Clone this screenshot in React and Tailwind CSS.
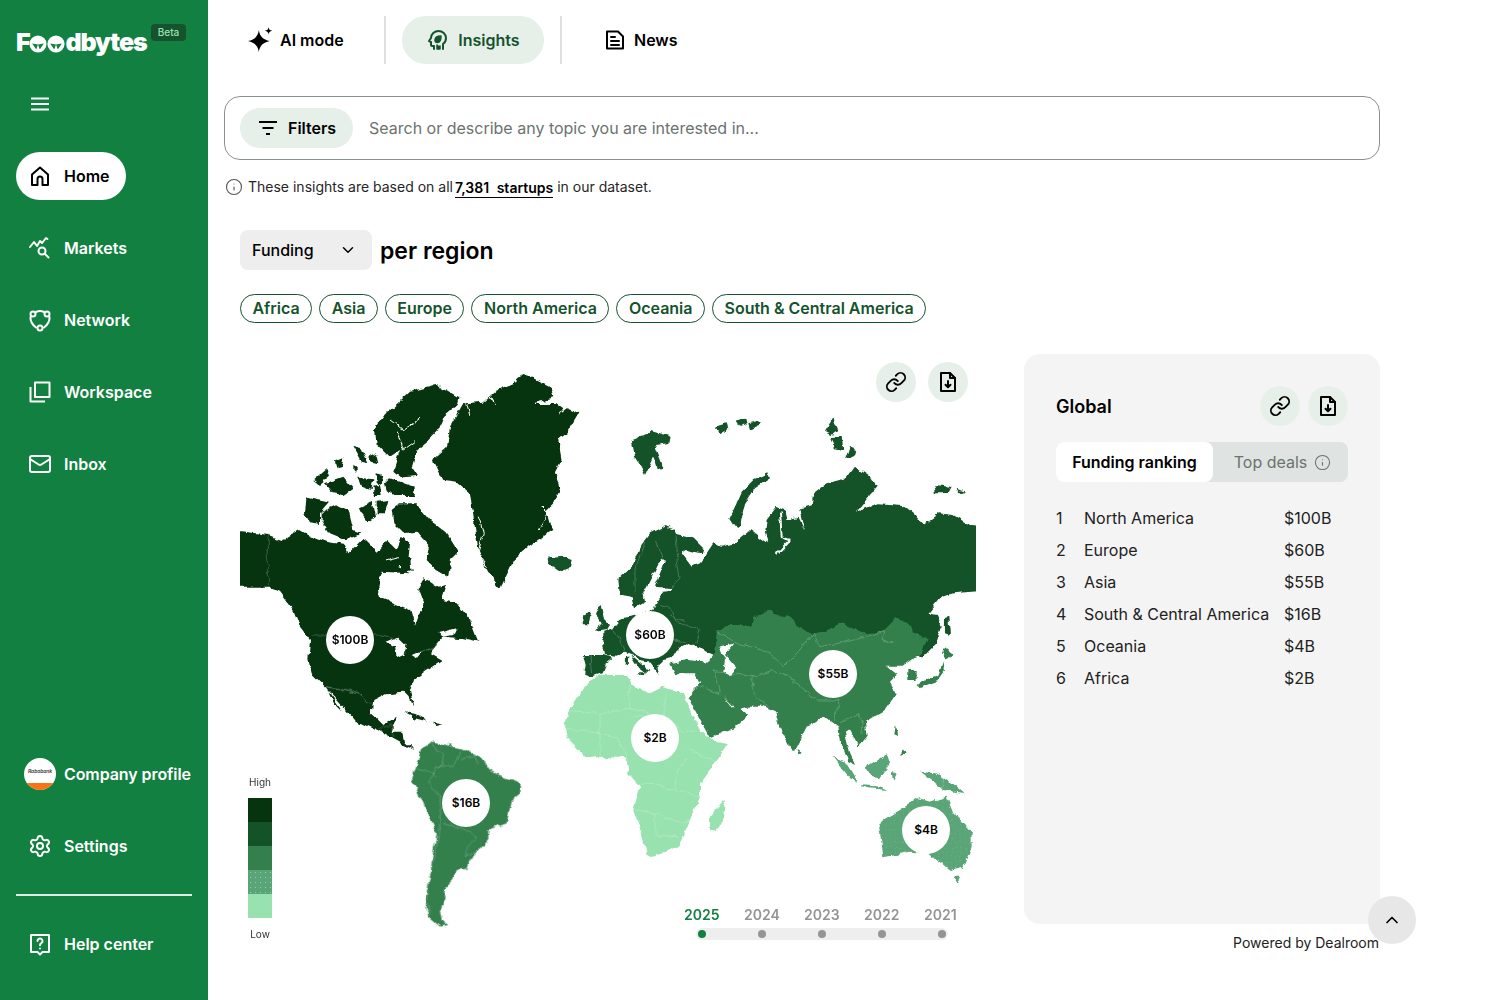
import { ChevronDown, ChevronUp, Info, Settings, Mail, Link as LinkIcon } from "lucide-react";

const C1 = "#06340f";
const C2 = "#145228";
const C3 = "#33804d";
const C4 = "#5aa577";
const C5 = "#98e2b0";

const Poly = ({ fill, d }) => <polygon fill={fill} points={d} />;
const Line = ({ d, w = 1.3, c = "#ffffff", o = 0.5 }) => (
  <polyline points={d} fill="none" stroke={c} strokeWidth={w} strokeOpacity={o} strokeLinejoin="round" />
);

const australia = "835,520 900,480 955,445 990,455 1040,440 1060,490 1115,550 1115,590 1090,650 1050,660 1010,630 990,610 930,605 890,615 850,622 845,580";

const WorldMap = () => (
  <svg viewBox="240 354 736 600" className="absolute inset-0 w-[736px] h-[600px]">
    <defs>
      <pattern id="dots" width="14" height="14" patternUnits="userSpaceOnUse">
        <circle cx="4" cy="4" r="1.2" fill="#ffffff" fillOpacity="0.35" />
      </pattern>
      {/* roughens the hand drawn coastlines */}
      <filter id="rough" filterUnits="userSpaceOnUse" x="200" y="340" width="820" height="620" colorInterpolationFilters="sRGB">
        <feTurbulence type="fractalNoise" baseFrequency="0.11" numOctaves="3" seed="7" result="noise" />
        <feDisplacementMap in="SourceGraphic" in2="noise" scale="6" xChannelSelector="R" yChannelSelector="G" />
      </filter>
    </defs>

    <g filter="url(#rough)">
      {/* north america + arctic, coords from the x3 crop at 230,370 */}
      <g transform="translate(230 370) scale(0.3333)">
        <Poly fill={C1} d="880,15 910,25 960,50 970,85 915,100 980,100 1000,115 985,135 1010,115 1045,130 1010,190 985,210 995,270 975,310 990,360 970,400 950,420 965,470 970,480 900,525 850,570 810,655 770,600 745,540 735,470 720,370 680,335 640,330 610,270 650,235 660,170 700,100 760,95 800,60 850,40" />
        <Poly fill={C1} d="470,130 540,65 620,45 685,85 680,105 640,140 620,185 590,215 560,240 545,290 565,320 520,325 490,300 510,240 480,260 440,220 435,180" />
        <Poly fill={C1} d="465,340 480,325 555,350 550,378 490,378 470,360" />
        <Poly fill={C1} d="230,380 300,395 270,430 270,465 240,460 225,430" />
        <Poly fill={C1} d="275,425 320,405 355,420 370,480 395,490 350,510 300,490 275,450" />
        <Poly fill={C1} d="250,330 290,295 300,320 270,345" />
        <Poly fill={C1} d="285,340 340,320 370,355 340,375 310,370" />
        <Poly fill={C1} d="370,230 395,235 415,280 395,275" />
        <Poly fill={C1} d="315,275 340,265 335,290 320,295" />
        <Poly fill={C1} d="420,250 440,260 445,280 425,275" />
        <Poly fill={C1} d="385,320 430,325 425,360 395,350" />
        <Poly fill={C1} d="440,310 460,315 455,345 440,340" />
        <Poly fill={C1} d="370,285 380,290 380,305 370,300" />
        <Poly fill={C1} d="430,350 450,345 455,375 435,375" />
        <Poly fill={C1} d="390,410 425,395 435,440 415,455 395,430" />
        <Poly fill={C1} d="440,395 475,390 465,430 440,430" />
        <Poly fill={C1} d="485,420 510,400 560,400 600,450 650,490 685,545 660,570 655,620 620,600 590,570 600,530 560,485 520,490 490,460" />
        <Poly fill={C1} d="505,570 540,560 545,600 515,610" />
        <Poly
          fill={C1}
          d="-30,475 115,495 155,510 210,480 235,495 290,515 345,525 355,550 400,505 440,545 470,510 500,540 515,500 540,520 535,570 500,590 540,610 455,605 445,650 450,680 540,720 555,770 565,740 580,700 565,660 580,625 620,650 650,645 635,690 680,700 720,750 745,815 700,805 640,800 600,850 635,870 590,900 550,930 540,960 550,1010 535,980 520,965 470,970 430,990 425,1030 460,1065 500,1040 485,1085 520,1085 525,1115 550,1140 520,1125 440,1080 375,1050 330,1000 290,955 245,910 235,870 240,810 210,770 190,720 150,665 115,650 -30,650"
        />
        <Poly fill={C1} d="290,955 310,985 340,1030 310,1000" />
        <Poly fill={C1} d="525,1030 560,1035 595,1055 555,1045" />
        <Poly fill={C1} d="605,1055 640,1060 620,1065" />
        <Poly fill={C2} d="955,565 1000,560 1025,570 1020,590 985,605 965,590" />
        {/* fjords and lakes */}
        <Line d="915,100 975,100" w={4} o={1} />
        <Line d="710,100 720,135" w={3} o={1} />
        <Line d="780,80 800,110" w={4} o={1} />
        <Line d="935,410 955,430 925,480" w={3} o={1} />
        <Line d="745,440 760,490 745,545 770,590" w={3} o={1} />
        <Line d="480,150 520,180 570,145" w={3} o={1} />
        <Line d="500,180 520,240 555,215" w={3} o={1} />
        <Line d="470,570 510,560" w={3} o={1} />
        <Poly fill="#ffffff" d="470,815 505,800 530,825 520,855 500,865 495,830" />
        <Poly fill="#ffffff" d="545,855 580,840 560,865" />
        <Poly fill="#ffffff" d="625,790 680,775 670,795 640,800" />
        <Line d="115,495 115,650" />
        <Line d="245,795 440,795 490,805" />
        <Line d="555,855 610,830 640,810 640,835 590,840" />
        <Line d="285,950 350,960 390,970 415,1000" />
      </g>

      {/* russia, scandinavia, arctic islands, crop at 560,360 */}
      <g transform="translate(560 360) scale(0.3333)">
        <Poly
          fill={C2}
          d="1300,500 1220,490 1180,465 1140,460 1090,495 1060,460 1030,435 950,430 890,455 950,380 930,350 885,320 860,355 800,370 760,400 755,435 720,445 735,510 715,470 680,480 672,450 650,440 620,480 615,520 625,550 570,510 525,550 480,560 460,550 420,610 395,620 365,580 380,570 425,580 430,565 400,535 350,525 340,505 320,495 270,520 240,560 215,620 175,660 180,705 215,715 222,745 255,725 250,700 260,680 300,600 315,605 285,680 340,685 300,715 340,730 420,820 450,880 500,900 1000,900 1095,885 1130,850 1145,800 1131,765 1105,760 1140,714 1180,700 1300,690"
        />
        <Poly fill={C2} d="215,240 265,220 275,210 330,225 325,250 285,255 310,320 290,325 280,290 255,345 240,315 225,290" />
        <Poly fill={C2} d="505,480 525,440 545,395 580,360 625,340 630,355 585,385 555,430 540,500 515,495" />
        <Poly fill={C2} d="465,200 500,190 505,205 480,220" />
        <Poly fill={C2} d="530,185 555,175 560,195 540,200" />
        <Poly fill={C2} d="565,190 605,180 600,195 570,208" />
        <Poly fill={C2} d="795,215 820,175 835,210 815,225" />
        <Poly fill={C2} d="810,235 845,230 850,270 825,265" />
        <Poly fill={C2} d="855,300 870,255 890,285" />
        <Poly fill={C2} d="1120,375 1175,380 1165,400 1125,400" />
        <Poly fill={C2} d="1190,385 1215,395 1205,400" />
        <Poly fill={C2} d="1155,774 1165,770 1170,825 1155,820" />
        <Line d="660,455 665,530 692,540 650,585" w={6} o={1} />
        <Line d="290,540 305,590 300,610" />
        <Line d="345,525 350,590 360,650 330,690" />
        <Line d="255,545 225,630 225,700" />
      </g>

      {/* europe + turkey, crop at 570,590 */}
      <g transform="translate(570 590) scale(0.3333)">
        <Poly fill={C2} d="42,195 100,195 130,205 105,225 95,250 60,262 45,255 50,225" />
        <Poly fill={C2} d="100,125 130,115 155,85 180,80 250,60 262,30 280,5 310,0 400,0 440,120 420,190 385,175 350,160 320,180 305,205 280,210 265,225 270,255 258,240 240,215 210,210 190,195 165,185 140,200 105,195 100,170" />
        <Poly fill={C2} d="180,195 205,215 235,240 225,250 205,235" />
        <Poly fill={C2} d="85,50 95,45 105,90 120,105 110,120 75,125 95,100 75,75" />
        <Poly fill={C2} d="40,75 65,65 55,100 35,100" />
        <Poly fill={C2} d="168,200 175,200 173,225 167,225" />
        <Poly fill={C2} d="205,250 225,250 220,262" />
        <Line d="130,115 150,150 165,185" />
        <Line d="60,195 65,255" />
        <Line d="270,45 300,55 330,100 390,120 380,160" />
        <Line d="300,75 345,95" />
        <Line d="310,150 350,155" />
      </g>

      {/* middle east and asia, africa, oceania, crop at 600,650 */}
      <g transform="translate(600 650) scale(0.3333)">
        <Poly
          fill={C3}
          d="210,40 260,30 330,35 345,10 350,-55 380,-75 455,-75 460,-100 510,-120 540,-100 570,-105 590,-70 640,-50 670,-55 725,-80 790,-50 845,-55 885,-95 925,-85 935,-55 980,-35 960,15 940,25 905,50 860,50 890,75 870,95 890,130 855,180 795,215 800,260 775,290 750,240 735,250 750,310 765,345 745,335 720,270 715,230 690,210 670,200 620,230 590,290 575,300 540,230 530,190 490,170 440,170 410,180 365,135 400,175 420,175 445,195 400,235 330,265 300,210 265,140 300,100 285,70 225,70"
        />
        <Poly fill={C3} d="925,60 950,60 950,90 925,90" />
        <Poly fill={C3} d="950,105 970,90 1015,75 1030,35 1035,60 1010,95 960,115" />
        <Poly fill={C3} d="1030,10 1035,-5 1060,15 1040,25" />
        <Poly fill={C3} d="590,295 605,305 595,315" />
        <Poly fill={C3} d="885,225 892,255 880,250" />
        <Poly fill={C3} d="905,295 922,305 905,315" />
        <Poly fill="#ffffff" d="360,-10 400,-20 375,15 410,55 390,75 370,65 375,30" />
        <Poly fill={C5} d="0,75 85,75 95,105 150,130 190,110 250,130 270,180 300,240 335,270 385,280 350,330 300,400 300,440 270,510 235,590 160,620 140,610 125,550 100,480 120,410 85,370 80,325 0,320 -40,325 -100,265 -105,235 -95,185 -35,95" />
        <Poly fill={C5} d="375,450 370,500 350,545 330,540 330,500" />
        <Poly fill={C4} d="700,320 745,345 775,395 750,385" />
        <Poly fill={C4} d="775,405 840,410 865,420 800,415" />
        <Poly fill={C4} d="800,350 860,310 870,340 840,385 810,380" />
        <Poly fill={C4} d="875,365 890,375 880,395" />
        <Poly fill={C4} d="960,365 1010,370 1060,405 1095,430 1030,420 990,390" />
        <Poly fill={C4} d={australia} />
        <Poly fill="url(#dots)" d={australia} />
        <Poly fill={C4} d="1060,680 1080,680 1070,703" />
        {/* country borders */}
        <Line d="85,105 90,175 0,190" />
        <Line d="195,125 195,200 95,200" />
        <Line d="90,175 195,200 260,250 290,240" />
        <Line d="255,290 310,320 350,330" />
        <Line d="100,400 170,405 225,420 300,440" />
        <Line d="105,480 170,490 245,520 270,510" />
        <Line d="165,490 165,555 240,560" />
        <Line d="225,420 230,360 260,330" />
        <Line d="-95,185 0,190 0,320" />
        <Line d="-100,235 50,260 85,330" />
        <Line d="340,60 360,130 300,110" />
        <Line d="340,65 400,70 460,80 455,120 520,190" />
        <Line d="460,80 520,60 580,90 650,150 720,150 700,210" />
        <Line d="350,-55 420,-20 510,10 550,50 590,10 640,-50" />
        <Line d="640,-50 660,-10 740,-25 850,-55" />
        <Line d="850,-55 850,-25 880,-25" />
        <Line d="720,215 780,190 790,250" />
        <Line d="1030,370 1030,420" />
      </g>

      {/* south america, crop at 240,660 */}
      <g transform="translate(240 660) scale(0.3333)">
        <Poly fill={C3} d="580,245 620,255 665,265 720,290 745,330 780,345 845,370 840,400 815,420 800,490 745,510 745,540 700,590 680,625 650,630 640,660 610,690 620,710 600,750 605,780 625,795 600,800 565,770 555,720 570,650 575,600 590,520 550,430 515,360 525,330 540,290 545,265" />
        <Line d="575,250 585,270 610,285 605,315 590,320 565,370 600,410" />
        <Line d="530,325 555,330 590,350" />
        <Line d="660,270 640,320 600,315" />
        <Line d="660,300 705,290 715,310" />
        <Line d="600,410 600,490 590,560 575,620 560,720 570,770" />
        <Line d="610,490 680,510 710,530 680,560 680,590 715,570" />
        <Line d="255,80 330,90 360,100 385,130 395,130" />
        <Line d="415,205 455,195 460,230" />
      </g>
    </g>
  </svg>
);

const CircleBtn = ({ children }) => (
  <button className="w-10 h-10 rounded-full bg-[#e7efe9] flex items-center justify-center text-black">
    {children}
  </button>
);

const FileDown = () => (
  <svg width="24" height="24" viewBox="0 0 24 24" fill="none" stroke="currentColor" strokeWidth="2" strokeLinejoin="round" strokeLinecap="round">
    <path d="M5 3h9l5 5v13H5z" />
    <path d="M14 3v5h5" />
    <path d="M12 11v6M9.5 14.8 12 17.3l2.5-2.5" />
  </svg>
);

const Bubble = ({ className, children }) => (
  <div className={`absolute w-12 h-12 rounded-full bg-white flex items-center justify-center text-xs font-semibold text-black ${className}`}>
    {children}
  </div>
);

const navIcon = {
  width: 24,
  height: 24,
  viewBox: "0 0 24 24",
  fill: "none",
  stroke: "currentColor",
  strokeWidth: 2,
  strokeLinecap: "round",
  strokeLinejoin: "round",
};

const NavItem = ({ icon, label }) => (
  <a className="flex items-center h-12 pl-3 gap-3 text-white font-semibold text-base">
    {icon}
    <span>{label}</span>
  </a>
);

const ranking = [
  ["North America", "$100B"],
  ["Europe", "$60B"],
  ["Asia", "$55B"],
  ["South & Central America", "$16B"],
  ["Oceania", "$4B"],
  ["Africa", "$2B"],
];

const years = ["2025", "2024", "2023", "2022", "2021"];
const regions = ["Africa", "Asia", "Europe", "North America", "Oceania", "South & Central America"];

const Leaf = () => (
  <svg width="18" height="18" viewBox="0 0 20 20" className="shrink-0 mt-[3px]">
    <circle cx="10" cy="10" r="9.5" fill="#fff" />
    <path d="M3.5 9.5 10 10.5 8 16zM16.5 9.5 10 10.5 12 16z" fill="#118040" />
  </svg>
);

export default function App() {
  return (
    <div className="flex min-h-[1000px] bg-white text-black font-['Inter',sans-serif]">
      <aside className="w-[208px] shrink-0 bg-[#118040] flex flex-col px-4">
        <div className="relative h-[80px] flex items-start pt-[26px]">
          <div className="flex items-center text-white font-black text-[25px] leading-[32px] tracking-[-0.045em]">
            <span>F</span>
            <Leaf />
            <Leaf />
            <span>dbytes</span>
          </div>
          <span className="absolute left-[135px] top-[24px] w-[35px] h-[17px] rounded bg-[#14532d] text-[#98e2b0] text-[10px] font-medium flex items-center justify-center">
            Beta
          </span>
        </div>
        <div className="h-12 pl-3 flex items-center text-white">
          <svg {...navIcon}>
            <path d="M3 6.500h18M3 12h18M3 17.500h18" strokeLinecap="butt" strokeWidth="1.800" />
          </svg>
        </div>
        <nav className="mt-6 flex flex-col gap-6">
          <a className="flex items-center h-12 w-[110px] pl-3 gap-3 bg-white text-black rounded-full font-semibold text-base">
            <svg {...navIcon}>
              <path d="M4 21V10.500L12 3.500l8 7V21h-5.500v-6a2.500 2.500 0 0 0-5 0v6z" />
            </svg>
            <span>Home</span>
          </a>
          <NavItem
            label="Markets"
            icon={
              <svg {...navIcon}>
                <path d="M2 11l4-5 3 4 3-5 2 2 4-5 1.500 1" />
                <circle cx="14" cy="15" r="3.500" />
                <path d="M17 18l3.500 3.500" />
              </svg>
            }
          />
          <NavItem
            label="Network"
            icon={
              <svg {...navIcon}>
                <path d="M8 4c2.500-1.300 5.500-1.300 8 0M21.500 9c.3 4-1.500 7.500-5.500 10.500M8 19.500C4 16.500 2.200 13 2.500 9" />
                <circle cx="5" cy="6" r="2.500" />
                <circle cx="19" cy="6" r="2.500" />
                <circle cx="12" cy="20" r="2.500" />
              </svg>
            }
          />
          <NavItem
            label="Workspace"
            icon={
              <svg {...navIcon}>
                <path d="M7 2.500h14.500V17H7z" strokeLinecap="butt" />
                <path d="M2.500 7v14.500H17" strokeLinecap="butt" />
              </svg>
            }
          />
          <NavItem label="Inbox" icon={<Mail size={24} strokeWidth={2} />} />
        </nav>
        <div className="mt-auto flex flex-col">
          <a className="flex items-center h-12 pl-2 gap-2 text-white font-semibold text-base whitespace-nowrap tracking-[-0.005em]">
            <span className="relative w-8 h-8 rounded-full bg-white overflow-hidden shrink-0 flex items-center justify-center">
              <span className="text-[5px] italic font-semibold text-[#333] -mt-1">Rabobank</span>
              <span className="absolute bottom-0 left-0 right-0 h-[7px] bg-[#f97316]" />
            </span>
            <span>Company profile</span>
          </a>
          <div className="mt-6">
            <NavItem label="Settings" icon={<Settings size={24} strokeWidth={2} />} />
          </div>
          <div className="mt-6 h-0.5 bg-[#e5e7eb]" />
          <div className="mt-6 mb-8">
            <NavItem
              label="Help center"
              icon={
                <svg {...navIcon}>
                  <path d="M3 3h18v17h-6.500L12 22.500 9.500 20H3z" />
                  <path d="M9.500 9a2.500 2.500 0 1 1 3.800 2.100c-.9.600-1.300 1-1.300 2.100M12 16.500v.1" />
                </svg>
              }
            />
          </div>
        </div>
      </aside>

      <main className="relative flex-1 pl-4 pt-4">
        <div className="flex items-center h-12">
          <a className="flex items-center gap-[6px] pl-6 w-[160px] font-semibold text-base">
            <svg width="26" height="26" viewBox="0 0 24 24" fill="currentColor">
              <path d="M10 3C11 9 14 11.500 20 13C14 14.500 11 17 10 23C9 17 6 14.500 0 13C6 11.500 9 9 10 3z" />
              <path d="M19 0c.3 2.300 1 3 3.500 3.500-2.500.5-3.200 1.200-3.500 3.500-.3-2.300-1-3-3.500-3.500 2.500-.5 3.200-1.200 3.500-3.500z" />
            </svg>
            AI mode
          </a>
          <div className="w-0.5 h-12 bg-[#e0e0e0]" />
          <a className="ml-4 w-[142px] h-12 rounded-full bg-[#e7efe9] text-[#14532d] flex items-center justify-center gap-2 font-semibold text-base">
            <svg {...navIcon}>
              <path d="M8 21v-3H6a1 1 0 0 1-1-1v-3l-2-1 2-3c0-4 3.500-7 7.500-7s7.500 3 7.500 7c0 3-1.500 5-3 6v5" />
              <path d="M15 8c-3 0-6 1-6 4 0 1.500 1 2.500 2.500 2.500C14 14.500 15 11 15 8zM11 17v4h3v-3" fill="currentColor" strokeWidth="1.500" />
            </svg>
            Insights
          </a>
          <div className="ml-4 w-0.5 h-12 bg-[#e0e0e0]" />
          <a className="ml-[41px] flex items-center gap-[7px] font-semibold text-base">
            <svg {...navIcon}>
              <path d="M4 3.500h11l5 5V20.500H4z" />
              <path d="M8 9h4M8 13h8M8 17h8" />
            </svg>
            News
          </a>
        </div>

        <div className="mt-8 w-[1156px] h-16 rounded-2xl border border-[#8a918d] flex items-center pl-[15px]">
          <button className="flex items-center gap-[9px] h-10 pl-[17px] pr-4 w-[113px] rounded-full bg-[#e7efe9] font-semibold text-base">
            <svg width="22" height="22" viewBox="0 0 22 22" fill="none" stroke="currentColor" strokeWidth="2">
              <path d="M2 5h18M5.500 11h11M9 17h4" />
            </svg>
            Filters
          </button>
          <span className="ml-4 text-base text-[#6b736f]">Search or describe any topic you are interested in...</span>
        </div>

        <div className="mt-[17px] h-5 flex items-center text-sm text-[#262626]">
          <Info size={18} strokeWidth={1.500} className="ml-[1px] mr-[5px] text-[#555]" />
          These insights are based on all
          <span className="ml-[2px] mr-1 font-semibold text-black border-b border-black leading-[18px] mt-[2px] [word-spacing:4px]">7,381 startups</span>
          in our dataset.
        </div>

        <div className="mt-[33px] ml-4 h-10 flex items-center gap-2">
          <button className="w-[132px] h-10 rounded-lg bg-[#eeeeee] flex items-center justify-between pl-3 pr-[15px] text-base font-medium">
            Funding
            <ChevronDown size={18} strokeWidth={2} />
          </button>
          <h2 className="text-[23px] font-semibold pt-[2px]">per region</h2>
        </div>

        <div className="mt-6 ml-4 flex gap-[7px]">
          {regions.map((r) => (
            <span key={r} className="h-[29px] px-[11.5px] pb-[2px] rounded-full border border-[#14532d] text-[#14532d] text-base font-semibold flex items-center">
              {r}
            </span>
          ))}
        </div>

        <div className="mt-[31px] ml-4 flex">
          <div className="relative w-[736px] h-[600px] shrink-0">
            <WorldMap />
            <div className="absolute left-[636px] top-2 flex gap-3">
              <CircleBtn><LinkIcon size={22} strokeWidth={2} /></CircleBtn>
              <CircleBtn><FileDown /></CircleBtn>
            </div>
            <Bubble className="left-[86px] top-[262px]">$100B</Bubble>
            <Bubble className="left-[386px] top-[257px]">$60B</Bubble>
            <Bubble className="left-[569px] top-[296px]">$55B</Bubble>
            <Bubble className="left-[391px] top-[360px]">$2B</Bubble>
            <Bubble className="left-[202px] top-[425px]">$16B</Bubble>
            <Bubble className="left-[662px] top-[452px]">$4B</Bubble>

            <div className="absolute left-[8px] top-[421px] w-6 flex flex-col items-center text-[10px] text-[#333]">
              <span className="h-[23px] whitespace-nowrap">High</span>
              <div className="h-6 w-6 bg-[#06340f]" />
              <div className="h-6 w-6 bg-[#145228]" />
              <div className="h-6 w-6 bg-[#33804d]" />
              <div className="h-6 w-6 bg-[#5aa577] bg-[radial-gradient(circle,#ffffff66_0.6px,transparent_0.8px)] bg-[length:5px_5px]" />
              <div className="h-6 w-6 bg-[#98e2b0]" />
              <span className="mt-[9px] whitespace-nowrap">Low</span>
            </div>

            <div className="absolute left-[444px] top-[551px] w-[300px]">
              <div className="flex text-sm font-semibold text-[#949494]">
                {years.map((y, i) => (
                  <span key={y} className={`w-[60px] ${i === 0 ? "text-[#118040]" : ""}`}>{y}</span>
                ))}
              </div>
              <div className="mt-[3px] ml-3 w-[252px] h-3 rounded-full bg-[#eeeeee] flex items-center justify-between px-[2px]">
                {years.map((y, i) => (
                  <span key={y} className={`w-2 h-2 rounded-full ${i === 0 ? "bg-[#118040]" : "bg-[#949494]"}`} />
                ))}
              </div>
            </div>
          </div>

          <div className="ml-12 w-[356px]">
            <section className="h-[570px] rounded-2xl bg-[#f4f4f4] p-8">
              <div className="flex items-center justify-between">
                <h3 className="text-lg font-semibold pt-[2px]">Global</h3>
                <div className="flex gap-2">
                  <CircleBtn><LinkIcon size={22} strokeWidth={2} /></CircleBtn>
                  <CircleBtn><FileDown /></CircleBtn>
                </div>
              </div>
              <div className="mt-4 h-10 rounded-lg bg-[#dfe3e1] flex items-center">
                <div className="w-[157px] h-10 rounded-lg bg-white flex items-center justify-center font-semibold text-base">Funding ranking</div>
                <div className="flex-1 flex items-center justify-center gap-[7px] pl-1 text-base text-[#6b736f]">
                  Top deals
                  <Info size={17} strokeWidth={1.500} />
                </div>
              </div>
              <div className="mt-5 text-base text-[#222]">
                {ranking.map(([name, value], i) => (
                  <div key={name} className="h-8 flex items-center">
                    <span className="w-7">{i + 1}</span>
                    <span className="w-[200px]">{name}</span>
                    <span>{value}</span>
                  </div>
                ))}
              </div>
            </section>
            <p className="mt-[9px] text-right text-sm text-[#222] pr-[1px]">Powered by Dealroom</p>
          </div>
        </div>

        <button className="absolute left-[1160px] top-[896px] w-12 h-12 rounded-full bg-[#e7e7e7] flex items-center justify-center text-black">
          <ChevronUp size={20} strokeWidth={2} />
        </button>
      </main>
    </div>
  );
}
